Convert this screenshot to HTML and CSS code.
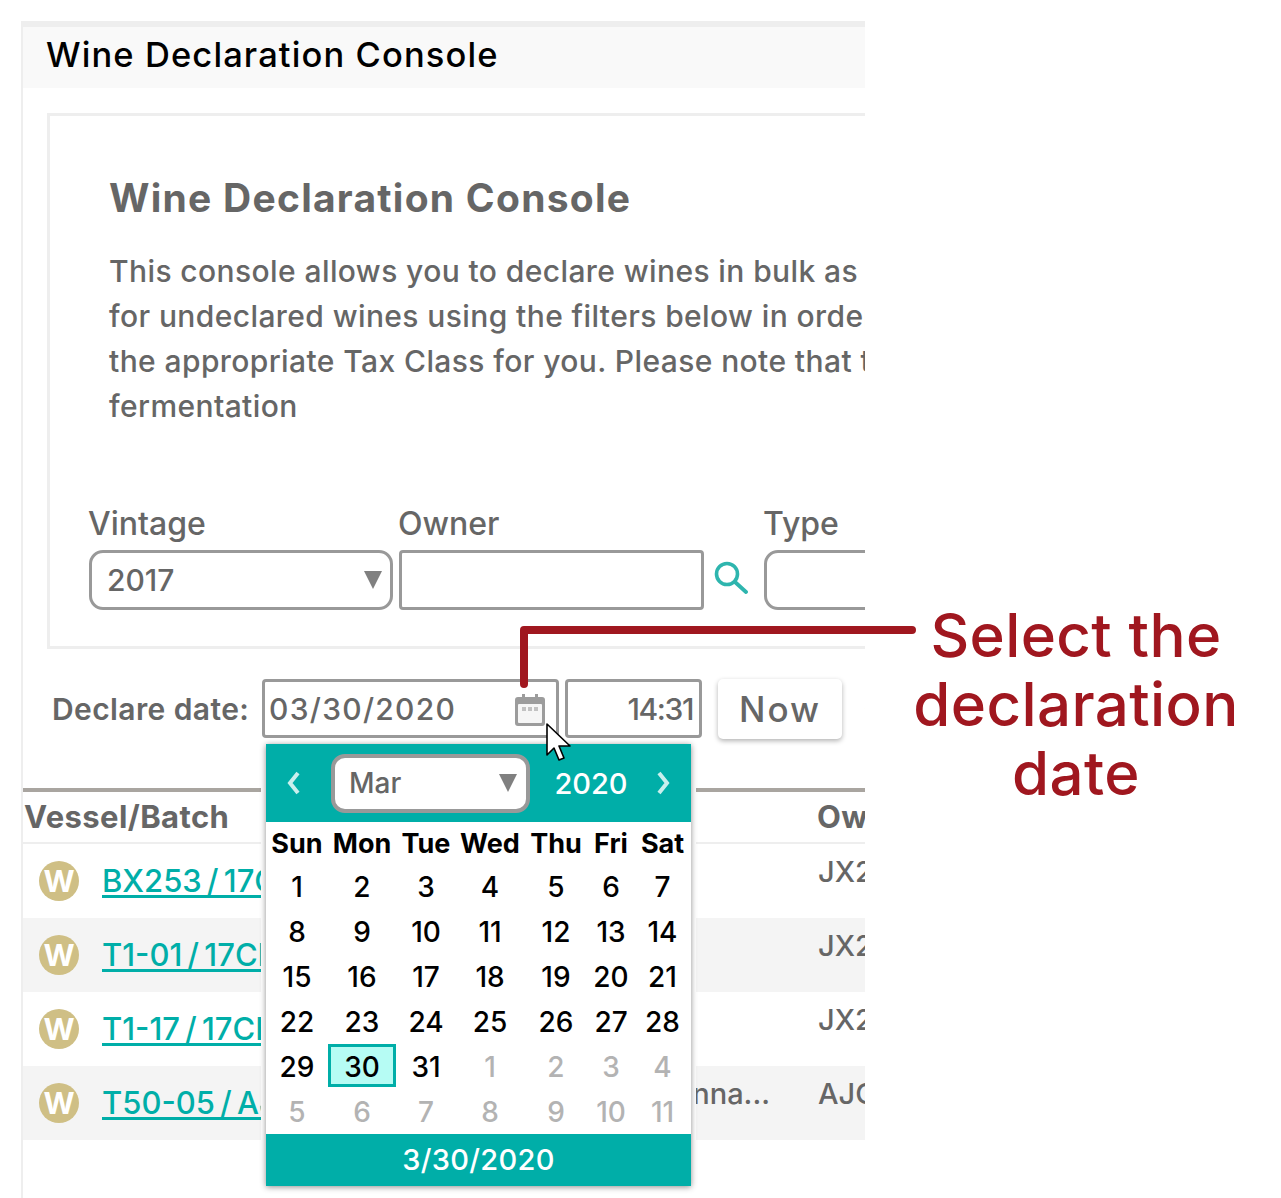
FILE: index.html
```html
<!DOCTYPE html>
<html lang="en">
<head>
  <meta charset="UTF-8">
  <title>Wine Declaration Console</title>
  <link rel="stylesheet" href="styles.css">
</head>
<body>
<div class="page">
  <div class="panel">
    <div class="panel-title">Wine Declaration Console</div>

    <div class="info-box">
      <div class="intro">
        <h2>Wine Declaration Console</h2>
        <p>This console allows you to declare wines in bulk as<br>
        for undeclared wines using the filters below in order<br>
        the appropriate Tax Class for you. Please note that t<br>
        fermentation</p>
      </div>
      <div class="filters">
        <div class="filter filter-vintage">
          <label>Vintage</label>
          <div class="select-box"><span>2017</span><i class="arrow"></i></div>
        </div>
        <div class="filter filter-owner">
          <label>Owner</label>
          <div class="text-box"></div>
        </div>
        <svg class="search-icon" viewBox="0 0 34 34">
          <circle cx="13" cy="13" r="10.5" fill="none" stroke="#2eb5ae" stroke-width="3.6"/>
          <path d="M21 21 L32 31" fill="none" stroke="#2eb5ae" stroke-width="3.8" stroke-linecap="round"/>
        </svg>
        <div class="filter filter-type">
          <label>Type</label>
          <div class="select-box"></div>
        </div>
      </div>
    </div>

    <div class="declare-row">
      <span class="declare-label">Declare date:</span>
      <div class="date-box">
        <span>03/30/2020</span>
        <svg class="cal-icon" viewBox="0 0 30 33">
          <path d="M3 4 H7 V1 H10 V4 H20 V1 H23 V4 H27 Q30 4 30 7 V30 Q30 33 27 33 H3 Q0 33 0 30 V7 Q0 4 3 4 Z" fill="#9c9c9c"/>
          <rect x="3" y="11" width="24" height="19" rx="1" fill="#f6f6f6"/>
          <rect x="7" y="14" width="4" height="4" fill="#c2c2c2"/>
          <rect x="13" y="14" width="4" height="4" fill="#c2c2c2"/>
          <rect x="19" y="14" width="4" height="4" fill="#c2c2c2"/>
        </svg>
      </div>
      <div class="time-box">14:31</div>
      <button class="btn-now">Now</button>
      <span class="next-btn">C</span>
    </div>

    <div class="table">
      <div class="table-head">
        <span>Vessel/Batch</span>
        <span></span>
        <span class="owner-cell">Owner</span>
      </div>
      <div class="table-row">
        <div class="vessel"><span class="badge">W</span><a href="#">BX253 / 17CH</a></div>
        <span></span>
        <span class="owner-cell">JX2017</span>
      </div>
      <div class="table-row">
        <div class="vessel"><span class="badge">W</span><a href="#">T1-01 / 17CH</a></div>
        <span></span>
        <span class="owner-cell">JX2017</span>
      </div>
      <div class="table-row">
        <div class="vessel"><span class="badge">W</span><a href="#">T1-17 / 17CH</a></div>
        <span></span>
        <span class="owner-cell">JX2017</span>
      </div>
      <div class="table-row">
        <div class="vessel"><span class="badge">W</span><a href="#">T50-05 / AJC</a></div>
        <span class="note-cell">nna...</span>
        <span class="owner-cell">AJC17</span>
      </div>
    </div>

    <div class="calendar-wrap">
      <div class="calendar">
        <div class="cal-head">
          <svg class="chev chev-prev" viewBox="0 0 14 24"><path d="M11 2 L3 12 L11 22" fill="none" stroke="#c9efed" stroke-width="4"/></svg>
          <div class="month-select"><span>Mar</span><i class="arrow"></i></div>
          <span class="cal-year">2020</span>
          <svg class="chev chev-next" viewBox="0 0 14 24"><path d="M3 2 L11 12 L3 22" fill="none" stroke="#c9efed" stroke-width="4"/></svg>
        </div>
        <div class="cal-grid">
          <b>Sun</b><b>Mon</b><b>Tue</b><b>Wed</b><b>Thu</b><b>Fri</b><b>Sat</b>
          <span>1</span><span>2</span><span>3</span><span>4</span><span>5</span><span>6</span><span>7</span>
          <span>8</span><span>9</span><span>10</span><span>11</span><span>12</span><span>13</span><span>14</span>
          <span>15</span><span>16</span><span>17</span><span>18</span><span>19</span><span>20</span><span>21</span>
          <span>22</span><span>23</span><span>24</span><span>25</span><span>26</span><span>27</span><span>28</span>
          <span>29</span><span class="today">30</span><span>31</span><span class="off">1</span><span class="off">2</span><span class="off">3</span><span class="off">4</span>
          <span class="off">5</span><span class="off">6</span><span class="off">7</span><span class="off">8</span><span class="off">9</span><span class="off">10</span><span class="off">11</span>
        </div>
        <div class="cal-foot">3/30/2020</div>
      </div>
    </div>
  </div>

  <svg class="callout-line" viewBox="0 0 400 66">
    <path d="M4 58 V4 H392" fill="none" stroke="#a0171f" stroke-width="8" stroke-linejoin="round" stroke-linecap="round"/>
  </svg>
  <div class="callout-text">Select the<br>declaration<br>date</div>
  <svg class="cursor" viewBox="0 0 26 40">
    <path d="M1 1 V32 L8 25 L13 37 L18 35 L13 23 L24 23 Z" fill="#fff" stroke="#000" stroke-width="1.6" stroke-linejoin="round"/>
  </svg>
</div>
</body>
</html>
```

FILE: styles.css
```css
html, body {
  margin: 0;
  padding: 0;
  background-color: #fff;
}

.page {
  position: relative;
  width: 1281px;
  height: 1198px;
  overflow: hidden;
  padding: 21px 0 0 21px;
  box-sizing: border-box;
  font-family: Inter, "Open Sans", sans-serif;
  color: #666;
}

.panel {
  position: relative;
  width: 844px;
  height: 1177px;
  box-sizing: border-box;
  overflow: hidden;
  border-left: 2px solid #eee;
  border-top: 6px solid #eee;
}

.panel-title {
  height: 61px;
  line-height: 55px;
  padding-left: 23px;
  background-color: #f9f9f9;
  font-size: 34.5px;
  font-weight: 500;
  letter-spacing: 1.1px;
  color: #000;
  white-space: nowrap;
}

.info-box {
  width: 900px;
  height: 536px;
  box-sizing: border-box;
  margin: 25px 0 0 24px;
  border: 3px solid #eee;
}

.intro {
  padding: 57px 0 0 59px;
  white-space: nowrap;
}

.intro h2 {
  margin: 0;
  font-size: 39px;
  line-height: 50px;
  font-weight: 700;
  letter-spacing: 1.25px;
}

.intro p {
  margin: 26px 0 0;
  font-size: 30px;
  line-height: 45px;
  font-weight: 550;
  letter-spacing: 0.4px;
}

.filters {
  display: flex;
  align-items: flex-end;
  padding-left: 39px;
  margin-top: 77px;
}

.filter {
  flex: none;
}

.filter label {
  display: block;
  font-size: 32px;
  line-height: 36px;
  font-weight: 500;
  margin-bottom: 8px;
  margin-left: -1px;
}

.select-box, .text-box {
  display: flex;
  align-items: center;
  justify-content: space-between;
  box-sizing: border-box;
  height: 60px;
  border: 3px solid #999;
  background-color: #fff;
  font-size: 30px;
  font-weight: 500;
}

.select-box {
  border-radius: 14px;
  padding: 0 8px 0 15px;
}

.text-box {
  border-radius: 4px;
}

.arrow {
  width: 0;
  height: 0;
  border-left: 9px solid transparent;
  border-right: 9px solid transparent;
  border-top: 18px solid #808080;
}

.filter-vintage { width: 304px; margin-right: 6px; }
.filter-owner { width: 305px; }
.filter-type { width: 300px; margin-left: 16px; }

.search-icon {
  flex: none;
  width: 34px;
  height: 34px;
  margin: 0 0 15px 10px;
}

.declare-row {
  display: flex;
  align-items: center;
  height: 59px;
  margin-top: 30px;
  padding-left: 29px;
  white-space: nowrap;
}

.declare-label {
  flex: none;
  width: 210px;
  font-size: 30px;
  font-weight: 600;
  letter-spacing: 0.4px;
}

.date-box, .time-box {
  flex: none;
  display: flex;
  align-items: center;
  box-sizing: border-box;
  height: 59px;
  border: 3px solid #999;
  border-radius: 4px;
  font-size: 30px;
  font-weight: 500;
}

.date-box {
  width: 297px;
  justify-content: space-between;
  padding: 0 11px 0 4px;
  letter-spacing: 1.3px;
}

.cal-icon {
  width: 30px;
  height: 33px;
  margin-top: 1px;
}

.time-box {
  width: 137px;
  margin-left: 6px;
  justify-content: flex-end;
  padding-right: 6px;
  letter-spacing: -1.4px;
}

.btn-now {
  flex: none;
  width: 124px;
  height: 60px;
  margin-left: 16px;
  border: 0;
  border-radius: 5px;
  background-color: #fff;
  box-shadow: 0 2px 5px rgba(0, 0, 0, 0.3);
  font-family: inherit;
  font-size: 35px;
  font-weight: 500;
  letter-spacing: 2px;
  color: #666;
}

.next-btn {
  flex: none;
  margin-left: 22px;
  font-size: 30px;
  font-weight: 500;
}

.table {
  margin-top: 50px;
  border-top: 4px solid #a9a5a0;
  width: 842px;
}

.table-head, .table-row {
  display: grid;
  grid-template-columns: 238px 509px 1fr;
  white-space: nowrap;
}

.table-head {
  height: 50px;
  line-height: 50px;
  border-bottom: 2px solid #eee;
  font-size: 31px;
  font-weight: 700;
  letter-spacing: 0.4px;
}

.table-head span:first-child {
  padding-left: 1px;
}

.table-row {
  height: 74px;
  font-size: 29px;
  font-weight: 500;
}

.table-row:nth-child(odd) {
  background-color: #f4f4f4;
}

.vessel {
  display: flex;
  align-items: center;
  padding-left: 16px;
  overflow: hidden;
}

.vessel a {
  color: #00aea8;
  margin-left: 23px;
  font-size: 31px;
  font-weight: 550;
  line-height: 36px;
  word-spacing: -3px;
  text-decoration: underline;
  text-decoration-thickness: 3px;
  text-underline-offset: 3px;
}

.badge {
  flex: none;
  width: 40px;
  height: 40px;
  line-height: 41px;
  border-radius: 50%;
  background-color: #cfbf85;
  color: #fff;
  text-align: center;
  font-size: 30px;
  font-weight: 700;
}

.note-cell {
  text-align: right;
  line-height: 56px;
}

.owner-cell {
  padding-left: 48px;
  line-height: 56px;
  overflow: hidden;
}

.table-head .owner-cell {
  line-height: 50px;
  padding-left: 47px;
}

.calendar-wrap {
  position: absolute;
  left: 238px;
  top: 712px;
  width: 435px;
  height: 452px;
  box-sizing: border-box;
  padding: 5px;
  background-color: #fff;
}

.calendar {
  background-color: #fff;
  box-shadow: 0 1px 6px rgba(0, 0, 0, 0.45);
}

.cal-head {
  display: grid;
  grid-template-columns: 65px 199px 122px 1fr;
  align-items: center;
  justify-items: center;
  height: 78px;
  background-color: #00aea8;
}

.chev {
  width: 14px;
  height: 24px;
}

.chev-prev {
  margin-right: 9px;
}

.chev-next {
  margin-right: 17px;
}

.month-select {
  display: flex;
  align-items: center;
  justify-content: space-between;
  box-sizing: border-box;
  width: 199px;
  height: 59px;
  padding: 0 9px 0 14px;
  border: 4px solid #999;
  border-radius: 14px;
  background-color: #fff;
  font-size: 28px;
  font-weight: 500;
}

.cal-year {
  color: #fff;
  font-size: 29px;
  font-weight: 500;
}

.cal-grid {
  display: grid;
  grid-template-columns: 62px 68px 60px 68px 64px 46px 57px;
  grid-auto-rows: 45px;
  height: 312px;
  color: #000;
  font-size: 28px;
  text-align: center;
  line-height: 40px;
}

.cal-grid b {
  font-size: 27px;
  font-weight: 700;
  line-height: 44px;
}

.cal-grid span {
  font-weight: 500;
}

.cal-grid .off {
  color: #b3b3b3;
}

.cal-grid .today {
  box-sizing: border-box;
  height: 43px;
  margin-top: -3px;
  line-height: 40px;
  border: 3px solid #00aea8;
  background-color: #b6fcf4;
}

.cal-foot {
  height: 52px;
  line-height: 52px;
  background-color: #00aea8;
  color: #fff;
  text-align: center;
  font-size: 29px;
  font-weight: 500;
  letter-spacing: 0.3px;
}

.callout-line {
  position: absolute;
  left: 520px;
  top: 626px;
  width: 400px;
  height: 66px;
}

.callout-text {
  position: absolute;
  left: 876px;
  top: 601px;
  width: 400px;
  text-align: center;
  color: #a0171f;
  font-size: 60px;
  line-height: 69px;
  font-weight: 500;
  letter-spacing: 0.4px;
}

.cursor {
  position: absolute;
  left: 546px;
  top: 723px;
  width: 26px;
  height: 40px;
}
```
